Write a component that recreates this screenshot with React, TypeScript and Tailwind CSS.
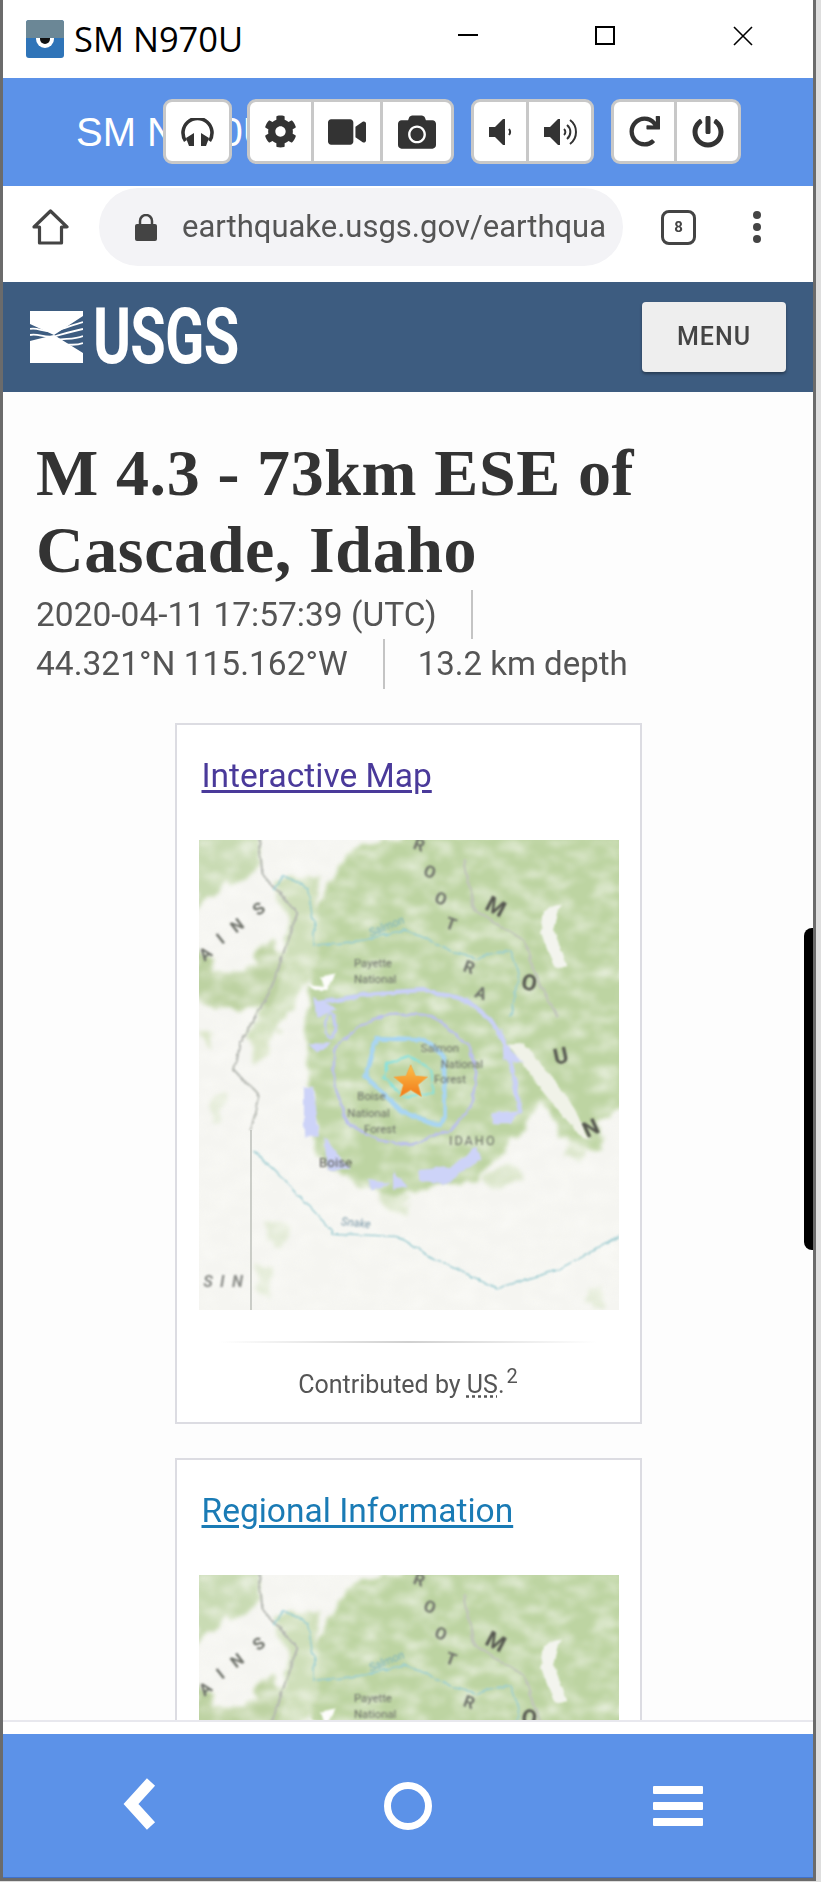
import { FaCamera, FaCog, FaPowerOff, FaRedo, FaVideo } from "react-icons/fa";

const HeadphonesIcon = () => (
  <svg width="33" height="28" viewBox="0 0 33 28" fill="none">
    <path d="M4.5 23A14.5 14.5 0 1 1 28.5 23" stroke="#333" strokeWidth="3.6" />
    <path d="M5 20L13 15V28H8Z M28 20L20 15V28H25Z" fill="#333" />
  </svg>
);

const SpeakerLow = () => (
  <svg width="23" height="26" viewBox="0 0 23 26" fill="none">
    <path d="M0 8H6L14 0H16V26H14L6 18H0Z" fill="#333" />
    <path d="M20 10A5 5 0 0 1 20 16" stroke="#333" strokeWidth="2" />
  </svg>
);

const SpeakerHigh = () => (
  <svg width="33" height="28" viewBox="0 0 33 28" fill="none">
    <path d="M0 9H6L14 1H16V27H14L6 19H0Z" fill="#333" />
    <path d="M20 11A4 4 0 0 1 20 17" stroke="#333" strokeWidth="2" />
    <path d="M23 7A9 9 0 0 1 23 21" stroke="#333" strokeWidth="2" />
    <path d="M26 2A15 15 0 0 1 26 26" stroke="#333" strokeWidth="2" />
  </svg>
);

const AppIcon = () => (
  <div className="relative w-[38px] h-[38px] rounded-[3px] overflow-hidden bg-[#2f74b8]">
    <div className="h-[18px] bg-[#6b8796]" />
    <div className="absolute left-[10px] top-[18px] w-[18px] h-[10px] rounded-b-full bg-white" />
    <div className="absolute left-[14px] top-[18px] w-[10px] h-[6px] rounded-b-full bg-[#111]" />
  </div>
);

const UsgsLogo = () => (
  <svg width="53" height="52" viewBox="0 0 53 52">
    <rect width="53" height="52" fill="#fff" />
    <path d="M0 13L24 24L0 30Z M53 5V42L24 24Z" fill="#3d5c80" />
    <path d="M0 18C8 16 14 22 24 20S42 14 53 11 M0 24C9 22 15 28 26 25S44 20 53 18 M27 29C34 27 44 29 53 25 M34 34C40 33 46 35 53 32" stroke="#fff" strokeWidth="1.8" fill="none" />
  </svg>
);

const MapImage = () => (
  <svg viewBox="25 30 1260 1410" className="block w-[420px] h-[470px]">
    <defs>
      <filter id="rough" x="-5%" y="-5%" width="110%" height="110%">
        <feTurbulence type="fractalNoise" baseFrequency="0.022" numOctaves="4" seed="4" result="n" />
        <feDisplacementMap in="SourceGraphic" in2="n" scale="46" xChannelSelector="R" yChannelSelector="G" />
        <feGaussianBlur stdDeviation="6" />
      </filter>
      <filter id="wiggle" x="-5%" y="-5%" width="110%" height="110%">
        <feTurbulence type="fractalNoise" baseFrequency="0.03" numOctaves="3" seed="9" result="n" />
        <feDisplacementMap in="SourceGraphic" in2="n" scale="16" xChannelSelector="R" yChannelSelector="G" />
        <feGaussianBlur stdDeviation="2.4" />
      </filter>
      <filter id="speckle" x="0" y="0" width="100%" height="100%">
        <feTurbulence type="fractalNoise" baseFrequency="0.014 0.024" numOctaves="4" seed="12" />
        <feColorMatrix type="matrix" values="0 0 0 0 0.97  0 0 0 0 0.97  0 0 0 0 0.94  1.8 0 0 0 -0.72" />
        <feGaussianBlur stdDeviation="7" />
      </filter>
      <filter id="soft">
        <feGaussianBlur stdDeviation="2.6" />
      </filter>
      <linearGradient id="star" x1="0" y1="0" x2="0" y2="1">
        <stop offset="0" stopColor="#fcc14a" />
        <stop offset="1" stopColor="#f27a1a" />
      </linearGradient>
    </defs>
    <rect x="25" y="30" width="1260" height="1410" fill="#f5f5f1" />
    <g filter="url(#rough)">
      <path d="M400 190L480 60L680 10L930 10L1300 10V830L1220 870L1240 970L1150 960L1050 810L1000 900L900 1000L860 1050L750 1070L600 1100L470 1040L380 980L360 800L340 600L360 480L370 300Z" fill="#bdd4a2" />
      <path d="M10 10H210L190 130L100 170L40 210L10 250Z" fill="#c9dbb4" />
      <path d="M240 150L380 140L390 400L330 480L260 600L200 640L170 620L230 480L300 300Z" fill="#cfdfba" />
      <path d="M10 340L70 420L160 430L240 320L280 400L240 530L120 540L10 500Z" fill="#bdd2a2" />
      <path d="M175 620L230 590L240 670L190 700Z M30 600L70 610L60 660Z" fill="#dbe6c9" />
      <path d="M560 1090L660 1100L640 1150L590 1140Z M1130 930L1190 950L1170 1000L1130 980Z M880 1040L960 1000L1000 1050L900 1070Z" fill="#dbe6cb" />
      <path d="M220 1170L290 1180L280 1250L230 1230Z M190 1300L250 1310L240 1400L200 1400Z M1180 1390L1230 1370L1240 1430L1190 1430Z M60 800L100 790L90 880L60 880Z" fill="#e3ebd7" />
    </g>
    <rect x="25" y="30" width="1260" height="1410" filter="url(#speckle)" opacity="0.75" />
    <g filter="url(#wiggle)">
      <path d="M1060 240L1110 220L1090 300L1130 410L1090 410L1050 310Z" fill="#f3f4ee" />
      <path d="M950 640L1000 640L1130 800L1200 930L1150 900L1060 790Z" fill="#f0f2e8" />
      <path d="M205 30L215 130L320 250L240 480L150 640L130 720L205 800L181 900" stroke="#b5b8b2" strokeWidth="6" fill="none" />
      <path d="M820 90L850 240L1000 330L1040 450L1100 560" stroke="#c2c6bc" strokeWidth="6" fill="none" />
      <path d="M190 960L330 1100L430 1210L620 1220L720 1280L920 1375L1100 1320L1285 1220" stroke="#9ccad0" strokeWidth="4" fill="none" />
      <path d="M250 180L280 140L350 170L370 290L370 350L520 330L640 300L800 370L860 385L960 360L985 430L960 560" stroke="#9ccfd6" strokeWidth="4" fill="none" />
      <path d="M350 465L400 470L390 440L435 430L410 480L370 480Z" fill="#fdfdfb" />
      <path d="M380 520L550 490L700 480L830 510L900 570L950 650L990 850" stroke="#c9d0f7" strokeWidth="14" fill="none" />
      <path d="M370 500L440 540L380 560Z M350 640L420 640L380 670Z M340 770L370 770L385 920L340 920Z M400 920L480 1020L410 1020Z M530 1050L600 1060L540 1080Z M610 1020L650 1070L610 1080Z M680 1020L780 1010L860 950L870 990L760 1065L690 1050Z M900 850L990 840L960 880L910 880Z M930 590L960 660L1000 700L940 690Z" fill="#cdd3f8" />
      <ellipse cx="420" cy="590" rx="14" ry="38" fill="none" stroke="#c3caf5" strokeWidth="7" />
      <path d="M430 660L500 590L600 550L720 555L830 640L860 730L840 830L780 900L660 945L560 930L470 880L430 760Z" fill="none" stroke="#bcc0f0" strokeWidth="7" />
      <path d="M560 625L700 628L760 680L762 860L750 885L640 850L525 740Z" fill="none" stroke="#a9d5f3" strokeWidth="14" />
      <path d="M590 700L660 680L725 720L725 790L640 800L580 745Z" fill="none" stroke="#7fe3e8" strokeWidth="5" />
    </g>
    <path d="M181 900V1440" stroke="#b5b8b2" strokeWidth="4" fill="none" />
    <g filter="url(#soft)">
      <g fontFamily="Roboto, sans-serif" fill="#6d706a" fontSize="34">
        <text x="490" y="410">Payette</text>
        <text x="490" y="460">National</text>
        <text x="690" y="665">Salmon</text>
        <text x="750" y="715">National</text>
        <text x="730" y="760">Forest</text>
        <text x="500" y="810">Boise</text>
        <text x="470" y="860">National</text>
        <text x="520" y="910">Forest</text>
        <text x="775" y="945" fontSize="38" letterSpacing="6">IDAHO</text>
        <text x="385" y="1012" fontSize="40" fill="#55574f">Boise</text>
        <text x="450" y="1185" fontSize="34" fontStyle="italic" fill="#7c99a8" transform="rotate(6 450 1185)">Snake</text>
        <text x="540" y="320" fontSize="34" fontStyle="italic" fill="#7db4c0" transform="rotate(-22 540 320)">Salmon</text>
      </g>
      <g fontFamily="Roboto, sans-serif" fontWeight="700" fill="#70736c" fontSize="50" textAnchor="middle">
        <text x="55" y="385" transform="rotate(-38 55 385)">A</text>
        <text x="100" y="340" transform="rotate(-38 100 340)">I</text>
        <text x="150" y="300" transform="rotate(-38 150 300)">N</text>
        <text x="215" y="250" transform="rotate(-38 215 250)">S</text>
        <text x="680" y="60" transform="rotate(20 680 60)">R</text>
        <text x="712" y="142" transform="rotate(20 712 142)">O</text>
        <text x="745" y="222" transform="rotate(20 745 222)">O</text>
        <text x="775" y="298" transform="rotate(20 775 298)">T</text>
        <text x="830" y="428" transform="rotate(20 830 428)">R</text>
        <text x="865" y="505" transform="rotate(20 865 505)">A</text>
        <text x="905" y="250" fontSize="66" fill="#55574f" transform="rotate(28 905 250)">M</text>
        <text x="1012" y="480" fontSize="66" fill="#55574f" transform="rotate(10 1012 480)">O</text>
        <text x="1115" y="700" fontSize="66" fill="#55574f" transform="rotate(-12 1115 700)">U</text>
        <text x="1210" y="915" fontSize="66" fill="#55574f" transform="rotate(-25 1210 915)">N</text>
        <text x="108" y="1372" fontSize="48" fontStyle="italic" letterSpacing="22" fill="#8a8c88">SIN</text>
      </g>
    </g>
    <path d="M660 705L674 738L710 741L682 764L692 799L660 780L628 799L638 764L610 741L646 738Z" fill="url(#star)" stroke="#f7a23c" strokeWidth="2" />
  </svg>
);

const ToolGroup = ({ cells }: { cells: { width: string; icon: React.ReactNode }[] }) => (
  <div className="flex h-[65px] rounded-[9px] border-[3px] border-[#c8c8c8] bg-white overflow-hidden">
    {cells.map((cell, i) => (
      <div
        key={i}
        className={`${cell.width} flex items-center justify-center text-[#333] ${
          i < cells.length - 1 ? "border-r-[3px] border-[#c8c8c8]" : ""
        }`}
      >
        {cell.icon}
      </div>
    ))}
  </div>
);

const MapCard = ({
  title,
  color,
  children,
}: {
  title: string;
  color: string;
  children: React.ReactNode;
}) => (
  <div className="w-[467px] mx-auto border-2 border-[#dcdce2] bg-white px-[22px] pt-[31px]">
    <a className={`ml-[3px] block h-[40px] text-[33.5px] leading-[40px] underline underline-offset-[3px] ${color}`}>
      {title}
    </a>
    <div className="mt-[44px]">{children}</div>
  </div>
);

export default function App() {
  return (
    <div className="w-[821px] h-[1882px] bg-[#dedede] overflow-hidden font-['Roboto',sans-serif]">
      <div className="w-[816px] h-[1881px] border-x-[3px] border-b-[3px] border-[#6b6b6b] bg-white flex flex-col">
        {/* window title */}
        <div className="h-[78px] shrink-0 flex items-center relative">
          <div className="ml-[23px]">
            <AppIcon />
          </div>
          <span className="ml-[10px] font-['Open_Sans',sans-serif] text-[34.5px] leading-none text-black">SM N970U</span>
          <div className="absolute left-[455px] top-[34px] w-[20px] h-[2px] bg-black" />
          <div className="absolute left-[592px] top-[26px] w-[20px] h-[19px] border-2 border-black" />
          <svg className="absolute left-[730px] top-[26px]" width="20" height="20" viewBox="0 0 20 20">
            <path d="M1 1L19 19M19 1L1 19" stroke="#000" strokeWidth="1.6" />
          </svg>
        </div>

        {/* device toolbar */}
        <div className="h-[108px] shrink-0 relative bg-[#5c92e8] flex items-center pl-[73px]">
          <span className="font-['Liberation_Sans',sans-serif] text-[40px] leading-none text-white">SM N970U</span>
          <div className="absolute left-[160px] top-[21px] flex">
            <ToolGroup cells={[{ width: "w-[63px]", icon: <HeadphonesIcon /> }]} />
            <div className="ml-[15px]">
              <ToolGroup
                cells={[
                  { width: "w-[64px]", icon: <FaCog size={33} /> },
                  { width: "w-[69px]", icon: <FaVideo size={38} /> },
                  { width: "w-[68px]", icon: <FaCamera size={38} /> },
                ]}
              />
            </div>
            <div className="ml-[17px]">
              <ToolGroup
                cells={[
                  { width: "w-[55px]", icon: <SpeakerLow /> },
                  { width: "w-[62px]", icon: <SpeakerHigh /> },
                ]}
              />
            </div>
            <div className="ml-[17px]">
              <ToolGroup
                cells={[
                  { width: "w-[63px]", icon: <FaRedo size={31} /> },
                  { width: "w-[61px]", icon: <FaPowerOff size={32} /> },
                ]}
              />
            </div>
          </div>
        </div>

        {/* phone screen */}
        <div className="h-[1534px] shrink-0 relative overflow-hidden bg-[#fdfdfd]">
          <div className="blur-[0.5px]">
            <div className="h-[96px] bg-white">
              <div className="h-[82px] flex items-center pl-[29px]">
                <svg width="37" height="36" viewBox="0 0 37 36" fill="none">
                  <path d="M18.5 2L35 18H29.5V34H7.5V18H2Z" stroke="#444" strokeWidth="3.2" strokeLinejoin="round" />
                </svg>
                <div className="ml-[30px] w-[524px] h-[78px] rounded-full bg-[#f3f3f6] flex items-center pl-[36px]">
                  <svg width="22" height="27" viewBox="0 0 22 27" className="shrink-0">
                    <path d="M5 10V7a6 6 0 0 1 12 0v3" stroke="#444" strokeWidth="2.5" fill="none" />
                    <rect x="0" y="10" width="22" height="17" rx="2" fill="#444" />
                  </svg>
                  <div className="ml-[25px] w-[423px] overflow-hidden whitespace-nowrap text-[31px] text-[#555]">
                    earthquake.usgs.gov/earthquakes
                  </div>
                </div>
                <div className="ml-[38px] w-[35px] h-[35px] rounded-[8px] border-[3px] border-[#444] flex items-center justify-center text-[15px] font-bold text-[#444]">
                  8
                </div>
                <div className="ml-[57px] flex flex-col gap-[4px]">
                  <div className="w-[8px] h-[8px] rounded-full bg-[#444]" />
                  <div className="w-[8px] h-[8px] rounded-full bg-[#444]" />
                  <div className="w-[8px] h-[8px] rounded-full bg-[#444]" />
                </div>
              </div>
            </div>

            <div className="h-[110px] bg-[#3d5c80] flex items-center pl-[27px]">
              <UsgsLogo />
              <div className="ml-[10px] w-[145px] h-[60px]">
                <span className="block origin-left scale-x-[0.74] font-bold text-[78px] leading-[60px] tracking-[-1px] text-white">
                  USGS
                </span>
              </div>
              <div className="ml-[404px] w-[144px] h-[70px] rounded-[4px] bg-[#eeeeee] shadow-[0_2px_3px_rgba(0,0,0,0.35)] flex items-center justify-center text-[25px] tracking-[1px] font-medium text-[#444]">
                MENU
              </div>
            </div>

            <div className="pt-[42px]">
              <h1 className="ml-[33px] font-['Liberation_Serif',serif] font-bold text-[66px] tracking-[0.6px] leading-[77px] text-[#333]">
                M 4.3 - 73km ESE of
                <br />
                Cascade, Idaho
              </h1>
              <div className="ml-[33px] mt-[2px] text-[33.5px] text-[#555]">
                <div className="flex h-[49px] items-center">
                  <span className="h-full leading-[49px] pr-[34px] border-r-2 border-[#c4c4c4]">2020-04-11 17:57:39 (UTC)</span>
                </div>
                <div className="flex h-[50px] items-center">
                  <span className="h-full leading-[50px] pr-[35px] border-r-2 border-[#c4c4c4]">44.321°N 115.162°W</span>
                  <span className="pl-[33px] text-[33px]">13.2 km depth</span>
                </div>
              </div>

              <div className="mt-[34px]">
                <MapCard title="Interactive Map" color="text-[#4a3a9a]">
                  <MapImage />
                  <div className="mt-[31px] mx-[20px] h-[2px] bg-gradient-to-r from-transparent via-[#d0d0d0] to-transparent" />
                  <p className="mt-[26px] mb-[21px] text-center text-[25px] leading-[32px] text-[#555]">
                    Contributed by{" "}
                    <span className="underline decoration-dotted">US</span>.
                    <sup className="ml-[2px] text-[20px]">2</sup>
                  </p>
                </MapCard>
              </div>

              <div className="mt-[34px]">
                <MapCard title="Regional Information" color="text-[#1a7bb5]">
                  <MapImage />
                </MapCard>
              </div>
            </div>
          </div>

          {/* phone edge-panel handle */}
          <div className="absolute right-0 top-[742px] w-[9px] h-[322px] rounded-l-[8px] bg-black" />
        </div>

        <div className="h-[14px] shrink-0 border-t-2 border-[#e8e8ee] bg-white" />

        {/* android nav bar */}
        <div className="flex-1 bg-[#5c92e8] border-b border-[#3f72cc] relative">
          <svg className="absolute left-[116px] top-[41px]" width="44" height="58" viewBox="0 0 44 58" fill="none">
            <path d="M32 7L12 29L32 51" stroke="#fff" strokeWidth="11" />
          </svg>
          <div className="absolute left-[381px] top-[48px] w-[48px] h-[48px] rounded-full border-[7px] border-white" />
          <div className="absolute left-[650px] top-[52px] flex flex-col gap-[8px]">
            <div className="w-[50px] h-[8px] rounded-[1px] bg-white" />
            <div className="w-[50px] h-[8px] rounded-[1px] bg-white" />
            <div className="w-[50px] h-[8px] rounded-[1px] bg-white" />
          </div>
        </div>
      </div>
    </div>
  );
}
